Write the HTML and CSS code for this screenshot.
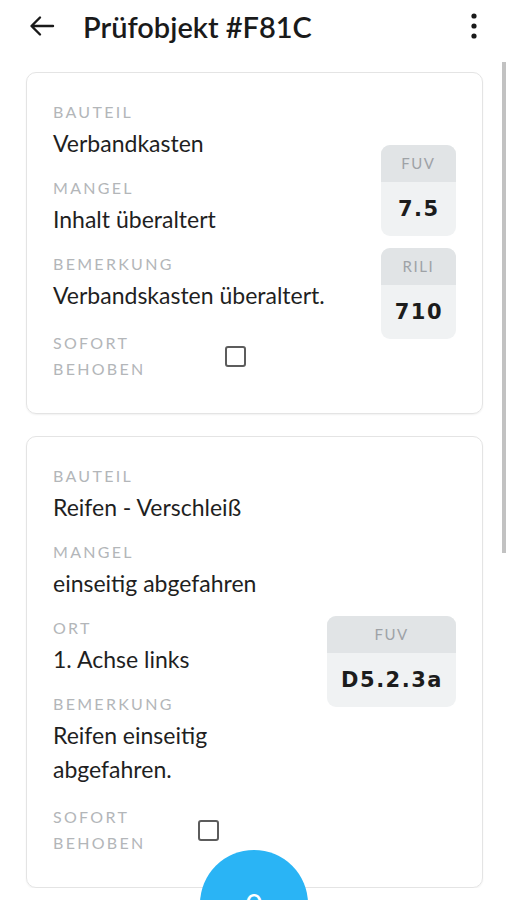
FILE: index.html
```html
<!DOCTYPE html>
<html lang="de">
<head>
    <meta charset="UTF-8">
    <meta name="viewport" content="width=device-width, initial-scale=1.0">
    <title>Prüfobjekt #F81C</title>
    <link rel="stylesheet" href="styles.css">
</head>
<body>
    <header class="topbar">
        <button class="icon-btn back" aria-label="Zurück">
            <svg width="26" height="24" viewBox="0 0 26 24" fill="none" stroke="#1a1a1a" stroke-width="2.4" stroke-linecap="round" stroke-linejoin="round">
                <path d="M24 12H3M11 3.5L2.5 12L11 20.5"/>
            </svg>
        </button>
        <h1>Prüfobjekt #F81C</h1>
        <button class="icon-btn menu" aria-label="Menü">
            <svg width="8" height="26" viewBox="0 0 8 26" fill="#1a1a1a">
                <circle cx="4" cy="3" r="2.6"/>
                <circle cx="4" cy="13" r="2.6"/>
                <circle cx="4" cy="23" r="2.6"/>
            </svg>
        </button>
    </header>

    <main class="mangel-list">
        <div class="mangel-card">
            <div class="fields">
                <div class="field">
                    <div class="label">Bauteil</div>
                    <div class="value">Verbandkasten</div>
                </div>
                <div class="field">
                    <div class="label">Mangel</div>
                    <div class="value">Inhalt überaltert</div>
                </div>
                <div class="field">
                    <div class="label">Bemerkung</div>
                    <div class="value">Verbandskasten überaltert.</div>
                </div>
                <div class="sofort">
                    <div class="label">Sofort behoben</div>
                    <div class="check-cell"><span class="checkbox"></span></div>
                </div>
            </div>
            <div class="codes">
                <div class="code">
                    <div class="code-head">FUV</div>
                    <div class="code-value">7.5</div>
                </div>
                <div class="code">
                    <div class="code-head">RILI</div>
                    <div class="code-value">710</div>
                </div>
            </div>
        </div>

        <div class="mangel-card">
            <div class="fields">
                <div class="field">
                    <div class="label">Bauteil</div>
                    <div class="value">Reifen - Verschleiß</div>
                </div>
                <div class="field">
                    <div class="label">Mangel</div>
                    <div class="value">einseitig abgefahren</div>
                </div>
                <div class="field">
                    <div class="label">Ort</div>
                    <div class="value">1. Achse links</div>
                </div>
                <div class="field">
                    <div class="label">Bemerkung</div>
                    <div class="value">Reifen einseitig abgefahren.</div>
                </div>
                <div class="sofort">
                    <div class="label">Sofort behoben</div>
                    <div class="check-cell"><span class="checkbox"></span></div>
                </div>
            </div>
            <div class="codes">
                <div class="code">
                    <div class="code-head">FUV</div>
                    <div class="code-value">D5.2.3a</div>
                </div>
            </div>
        </div>
    </main>

    <div class="scrollbar"></div>
    <button class="fab">0</button>
</body>
</html>
```

FILE: styles.css
```css
body {
    font-family: Lato, "Noto Sans", sans-serif;
    background-color: #fff;
    color: #1f1f1f;
    margin: 0;
    overflow: hidden;
}

.topbar {
    display: flex;
    align-items: center;
    height: 52px;
    padding: 0 28px 0 29px;
}

.icon-btn {
    display: flex;
    align-items: center;
    justify-content: center;
    padding: 0;
    border: none;
    background: none;
}

.topbar h1 {
    flex: 1;
    margin: 0 0 0 28px;
    font-size: 29px;
    font-weight: 600;
    color: #1a1a1a;
}

.mangel-list {
    display: flex;
    flex-direction: column;
    gap: 22px;
    padding: 20px 23px 0 26px;
}

.mangel-card {
    display: flex;
    align-items: center;
    gap: 16px;
    padding: 29px 26px 31px 26px;
    border: 1px solid #e4e4e4;
    border-radius: 10px;
    box-shadow: 0 1px 2px rgba(0, 0, 0, 0.06);
}

.fields {
    flex: 1;
}

.field {
    margin-bottom: 18px;
}

.field:last-of-type {
    margin-bottom: 8px;
}

.label {
    font-size: 16px;
    line-height: 20px;
    letter-spacing: 2.3px;
    text-transform: uppercase;
    color: #b3b6b9;
    margin-bottom: 4px;
}

.value {
    font-size: 23px;
    line-height: 34px;
}

.sofort {
    display: grid;
    grid-template-columns: 1fr 1fr;
    align-items: center;
}

.sofort .label {
    line-height: 26px;
    margin: 0;
}

.check-cell {
    padding-left: 16px;
}

.checkbox {
    display: block;
    width: 17px;
    height: 17px;
    border: 2px solid #5c5c5c;
    border-radius: 3px;
}

.codes {
    display: flex;
    flex-direction: column;
    gap: 12px;
}

.code {
    background: #f0f2f3;
    border-radius: 9px;
    overflow: hidden;
    text-align: center;
}

.code-head {
    height: 37px;
    line-height: 37px;
    background: #e1e4e6;
    font-size: 15px;
    letter-spacing: 1.5px;
    color: #9ea2a6;
}

.code-value {
    height: 54px;
    line-height: 54px;
    padding: 0 13px 0 14px;
    font-family: "DejaVu Sans", sans-serif;
    font-weight: bold;
    font-size: 21px;
    letter-spacing: 1.5px;
    color: #1c1c1c;
}

.scrollbar {
    position: absolute;
    top: 62px;
    right: 0;
    width: 4px;
    height: 491px;
    background: #c2c2c2;
}

.fab {
    position: fixed;
    left: 200px;
    top: 850px;
    width: 108px;
    height: 108px;
    border: none;
    border-radius: 50%;
    background: #2ab4f5;
    color: #fff;
    font-family: Lato, sans-serif;
    font-size: 30px;
    padding: 0;
}
```
